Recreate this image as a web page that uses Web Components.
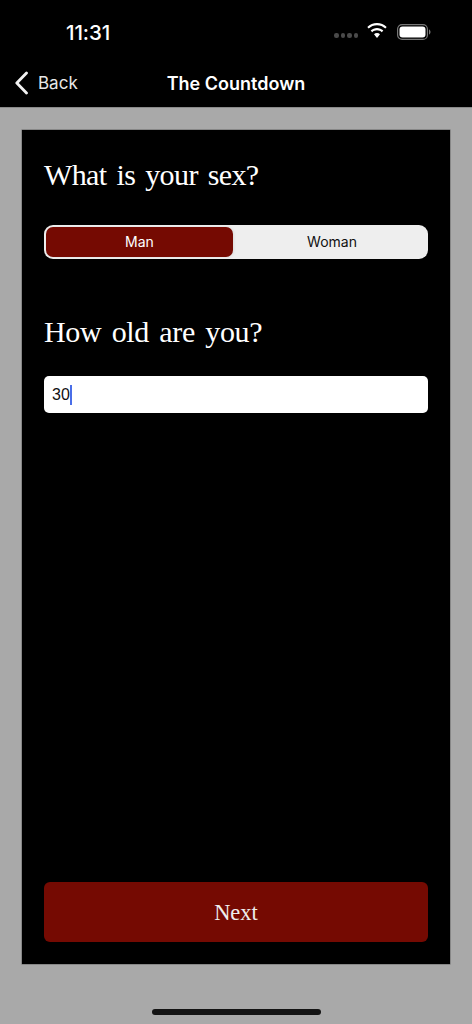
<!DOCTYPE html>
<html>
<head>
<meta charset="utf-8">
<title>The Countdown</title>
<style>
  html, body { margin: 0; height: 100%; background: #a9a9a9; }
  body { font-family: "Inter", "Liberation Sans", sans-serif; }
</style>
</head>
<body>
<app-screen>
  <status-bar slot="top"></status-bar>
  <nav-bar slot="top" title="The Countdown"></nav-bar>
  <question-card>
    <div slot="fields">
      <question-title>What is your sex?</question-title>
      <segment-switch first="Man" second="Woman"></segment-switch>
      <question-title class="age">How old are you?</question-title>
      <age-field value="30"></age-field>
    </div>
    <next-button slot="action">Next</next-button>
  </question-card>
</app-screen>

<script>
class AppScreen extends HTMLElement {
    constructor() {
        super();
        this.attachShadow({ mode: "open" });
        this.shadowRoot.innerHTML = `
        <style>
          :host { display: flex; flex-direction: column; position: relative; width: 472px; height: 1024px; overflow: hidden; background: #a9a9a9; }
          header { background: #000; height: 107px; border-bottom: 1px solid #8a8a8a; box-sizing: content-box; }
          main { flex: 1; display: flex; padding: 22px 22px 60px; min-height: 0; }
          .home { position: absolute; left: 152px; bottom: 9px; width: 169px; height: 6px; border-radius: 3px; background: #141414; }
        </style>
        <header><slot name="top"></slot></header>
        <main><slot></slot></main>
        <div class="home"></div>`;
    }
}

class StatusBar extends HTMLElement {
    constructor() {
        super();
        this.attachShadow({ mode: "open" });
        this.shadowRoot.innerHTML = `
        <style>
          :host { display: flex; align-items: center; justify-content: space-between; height: 64px; padding: 0 41px 0 66px; color: #fff; box-sizing: border-box; }
          .time { font: 500 20.500px "Inter", sans-serif; letter-spacing: -.1px; }
          .icons { display: flex; align-items: center; }
          .dots { display: flex; gap: 2px; margin-top: 7px; margin-right: 8px; }
          .dots i { width: 4.500px; height: 4.500px; border-radius: 50%; background: #4a4a4a; }
          .wifi { margin-right: 9px; margin-top: -2px; }
          svg { display: block; }
        </style>
        <span class="time">11:31</span>
        <span class="icons">
          <span class="dots"><i></i><i></i><i></i><i></i></span>
          <svg class="wifi" width="22" height="16" viewBox="0 0 22 16" fill="#fff">
            <path d="M11 2.200c3.200 0 6.100 1.200 8.300 3.300l1.400-1.600C18.100 1.500 14.700 0 11 0S3.900 1.500 1.300 3.900l1.400 1.600C4.900 3.400 7.800 2.200 11 2.200z"/>
            <path d="M11 7.300c1.800 0 3.500.7 4.800 1.900l1.500-1.600C15.600 6 13.400 5 11 5S6.400 6 4.700 7.600l1.500 1.600C7.500 8 9.200 7.300 11 7.300z"/>
            <path d="M11 10.100c-1.100 0-2.200.4-3 1.200l3 3.700 3-3.700c-.8-.8-1.900-1.200-3-1.200z"/>
          </svg>
          <svg width="34" height="16" viewBox="0 0 34 16">
            <rect x=".6" y=".6" width="29.800" height="14.800" rx="4.500" fill="none" stroke="#777" stroke-width="1.200"/>
            <rect x="2.500" y="2.500" width="26" height="11" rx="3" fill="#fff"/>
            <path d="M32 5.500c.9.300 1.500 1.300 1.500 2.500s-.6 2.200-1.500 2.500z" fill="#777"/>
          </svg>
        </span>`;
    }
}

class NavBar extends HTMLElement {
    constructor() {
        super();
        this.attachShadow({ mode: "open" });
        this.shadowRoot.innerHTML = `
        <style>
          :host { display: flex; align-items: flex-start; justify-content: center; position: relative; height: 43px; color: #fff; font-family: "Inter", sans-serif; }
          .title { font-size: 18px; font-weight: 600; line-height: 39px; }
          .back { position: absolute; left: 15px; top: 7px; display: flex; align-items: center; gap: 10px; font-size: 17px; color: #e8e8e8; }
          svg { display: block; }
        </style>
        <span class="back">
          <svg width="13" height="24" viewBox="0 0 13 24" fill="none" stroke="#f2f2f2" stroke-width="2.800" stroke-linecap="round" stroke-linejoin="round"><path d="M11.500 2 1.800 12l9.700 10"/></svg>
          Back
        </span>
        <span class="title">${this.getAttribute("title")}</span>`;
    }
}

class QuestionCard extends HTMLElement {
    constructor() {
        super();
        this.attachShadow({ mode: "open" });
        this.shadowRoot.innerHTML = `
        <style>
          :host { flex: 1; display: flex; flex-direction: column; justify-content: space-between; background: #000; padding: 22px; box-sizing: border-box; box-shadow: 0 0 0 .5px #666; }
        </style>
        <slot name="fields"></slot>
        <slot name="action"></slot>`;
    }
}

class QuestionTitle extends HTMLElement {
    constructor() {
        super();
        this.attachShadow({ mode: "open" });
        this.shadowRoot.innerHTML = `
        <style>
          :host { display: block; height: 46px; line-height: 46px; color: #fff; font-family: "Liberation Serif", serif; font-size: 30px; word-spacing: 3px; letter-spacing: -.6px; }
          :host(.age) { margin-top: 50px; letter-spacing: -.3px; }
        </style>
        <slot></slot>`;
    }
}

class SegmentSwitch extends HTMLElement {
    constructor() {
        super();
        this.attachShadow({ mode: "open" });
        this.shadowRoot.innerHTML = `
        <style>
          :host { display: flex; height: 34px; margin-top: 27px; box-sizing: border-box; padding: 2px; border-radius: 9px; background: #eeeeee; font: 400 14px "Inter", sans-serif; color: #111; }
          span { display: flex; align-items: center; justify-content: center; padding-bottom: 1px; }
          .on { width: 187px; border-radius: 7px; background: #750a02; color: #fff; box-shadow: 1px 0 3px rgba(0,0,0,.08); }
          .off { flex: 1; padding-left: 5px; }
        </style>
        <span class="on">${this.getAttribute("first")}</span>
        <span class="off">${this.getAttribute("second")}</span>`;
    }
}

class AgeField extends HTMLElement {
    constructor() {
        super();
        this.attachShadow({ mode: "open" });
        this.shadowRoot.innerHTML = `
        <style>
          :host { display: flex; align-items: center; height: 37px; margin-top: 21px; padding-left: 8px; box-sizing: border-box; background: #fff; border-radius: 5px; color: #111; font: 400 16px "Liberation Sans", sans-serif; }
          i { width: 2.500px; height: 20px; background: #4a6ee8; }
        </style>
        <span>${this.getAttribute("value")}</span><i></i>`;
    }
}

class NextButton extends HTMLElement {
    constructor() {
        super();
        this.attachShadow({ mode: "open" });
        this.shadowRoot.innerHTML = `
        <style>
          :host { display: flex; align-items: center; justify-content: center; height: 60px; box-sizing: border-box; padding-top: 2px; background: #750a02; border-radius: 6px; color: #eee; font-family: "Liberation Serif", serif; font-size: 22.500px; }
        </style>
        <slot></slot>`;
    }
}

customElements.define("app-screen", AppScreen);
customElements.define("status-bar", StatusBar);
customElements.define("nav-bar", NavBar);
customElements.define("question-card", QuestionCard);
customElements.define("question-title", QuestionTitle);
customElements.define("segment-switch", SegmentSwitch);
customElements.define("age-field", AgeField);
customElements.define("next-button", NextButton);
</script>
</body>
</html>
